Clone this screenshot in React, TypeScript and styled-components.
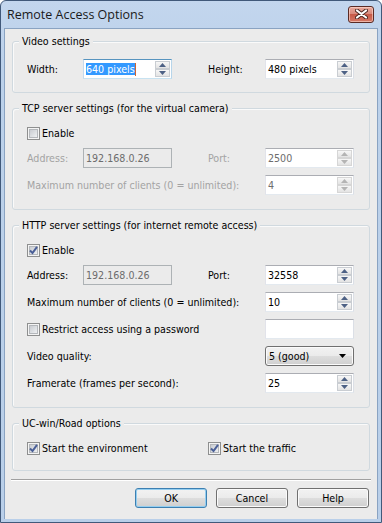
import React from 'react';
import styled, { createGlobalStyle } from 'styled-components';

const GlobalStyle = createGlobalStyle`
  html, body {
    margin: 0;
    padding: 0;
    background: #ffffff;
  }
  body {
    font-family: "DejaVu Sans Condensed", "DejaVu Sans", sans-serif;
    font-stretch: condensed;
    font-size: 10.6px;
    color: #000000;
  }
`;

const Window = styled.div`
  width: 382px;
  height: 523px;
  box-sizing: border-box;
  display: flex;
  flex-direction: column;
  border: 1px solid #41597a;
  border-radius: 6px 6px 0 0;
  background: linear-gradient(#c3d6ee, #bcd1ea 60px, #b9cfe9);
  padding: 0 3px 3px;
`;

const TitleBar = styled.div`
  height: 27px;
  flex: none;
  display: flex;
  align-items: center;
  justify-content: space-between;
  padding: 0 4px 0 3px;
`;

const Title = styled.span`
  font-family: "Open Sans", "DejaVu Sans", sans-serif;
  font-stretch: normal;
  font-weight: 400;
  font-size: 12.5px;
  color: #1a1a1a;
`;

const CloseButton = styled.div`
  width: 26px;
  height: 17px;
  box-sizing: border-box;
  margin-top: -1px;
  border: 1px solid #5a2b25;
  border-radius: 3px;
  background: linear-gradient(#e9a99c, #d98a7c 45%, #c75a48 50%, #d47866);
  box-shadow: inset 0 0 0 1px rgba(255, 220, 210, 0.6);
  display: flex;
  align-items: center;
  justify-content: center;
`;

const Client = styled.div`
  flex: 1;
  display: flex;
  flex-direction: column;
  gap: 8px;
  background: #ebebeb;
  border: 1px solid #8aa3c2;
  border-bottom: none;
  padding: 5px 7px 0;
`;

const Group = styled.fieldset<{ $top: number; $bottom: number }>`
  margin: 0;
  min-width: 0;
  border: 1px solid #d0d9df;
  border-radius: 3px;
  box-shadow: inset 1px 1px 0 #fafafa;
  padding: ${(p) => p.$top}px 15px ${(p) => p.$bottom}px 14px;
  display: flex;
  flex-direction: column;
  gap: 7px;
`;

const Legend = styled.legend`
  margin-left: -8px;
  padding: 0 3px;
  line-height: 14px;
  background: #ebebeb;
`;

const Row = styled.div`
  display: grid;
  grid-template-columns: 56px 89px 36px 57px 89px;
  align-items: center;
  height: 20px;
`;

const CheckRow = styled.div`
  display: grid;
  grid-template-columns: 181px 146px;
  align-items: center;
  height: 16px;
`;

const Label = styled.span<{ $span?: number; $disabled?: boolean }>`
  grid-column: span ${(p) => p.$span ?? 1};
  white-space: nowrap;
  color: ${(p) => (p.$disabled ? '#a3a3a3' : '#000000')};
`;

const Edit = styled.div<{ $disabled?: boolean; $focused?: boolean; $dim?: boolean }>`
  box-sizing: border-box;
  height: 20px;
  display: flex;
  align-items: center;
  padding: 0 1px 0 2px;
  background: ${(p) => (p.$disabled ? '#ebebeb' : '#ffffff')};
  border: 1px solid;
  border-color: ${(p) =>
    p.$focused
      ? '#5794bf #b7d5ea #c7e2f1 #c5daed'
      : p.$disabled
        ? '#adb2b5'
        : '#abadb3 #dbdfe6 #e3e9ef #e2e3ea'};
  color: ${(p) => (p.$disabled || p.$dim ? '#6d6d6d' : '#000000')};
  white-space: nowrap;
`;

const Selection = styled.span`
  background: #3399ff;
  color: #ffffff;
`;

const Caret = styled.span`
  width: 1px;
  height: 13px;
  background: #cc6633;
`;

const Spin = styled.div`
  margin-left: auto;
  width: 15px;
  height: 16px;
  display: flex;
  flex-direction: column;
`;

const SpinHalf = styled.div<{ $disabled?: boolean }>`
  flex: 1;
  display: flex;
  align-items: center;
  justify-content: center;
  box-sizing: border-box;
  border: 1px solid ${(p) => (p.$disabled ? '#d6d6d6' : '#c9cdd2')};
  background: linear-gradient(#f7f7f7, #e3e3e3);
  color: ${(p) => (p.$disabled ? '#b4b4b4' : '#4d6185')};
`;

const Combo = styled.div`
  box-sizing: border-box;
  height: 20px;
  display: flex;
  align-items: center;
  justify-content: space-between;
  padding: 0 7px 0 3px;
  border: 1px solid #707070;
  border-radius: 3px;
  background: linear-gradient(#f2f2f2, #ebebeb 48%, #dddddd 52%, #cfcfcf);
  box-shadow: inset 0 0 0 1px #fbfbfb;
`;

const CheckLabel = styled.label<{ $disabled?: boolean }>`
  display: flex;
  align-items: center;
  gap: 2px;
  white-space: nowrap;
  color: ${(p) => (p.$disabled ? '#a3a3a3' : '#000000')};
`;

const Box = styled.span`
  position: relative;
  width: 13px;
  height: 13px;
  box-sizing: border-box;
  border: 1px solid #8e8f8f;
  padding: 1px;
  background: #f4f4f4;
  flex: none;
`;

const BoxInner = styled.span`
  display: block;
  width: 9px;
  height: 9px;
  box-sizing: border-box;
  border: 1px solid #b4b7bb;
  background: linear-gradient(135deg, #c9ccd1, #eef0f2);
`;

const Tick = styled.svg`
  position: absolute;
  left: 0;
  top: 0;
`;

const Separator = styled.div`
  height: 1px;
  margin: 0 -1px;
  background: #a0a0a0;
  box-shadow: 0 1px 0 #ffffff;
`;

const ButtonBar = styled.div`
  display: flex;
  justify-content: flex-end;
  gap: 9px;
  padding-right: 1px;
`;

const Button = styled.button<{ $default?: boolean }>`
  width: 72px;
  height: 20px;
  padding: 0;
  font: inherit;
  color: #000000;
  border: 1px solid ${(p) => (p.$default ? '#3c7fb1' : '#707070')};
  border-radius: 3px;
  background: linear-gradient(#f2f2f2, #ebebeb 48%, #dddddd 52%, #cfcfcf);
  box-shadow: inset 0 0 0 1px ${(p) => (p.$default ? '#94cef0' : '#fbfbfb')};
`;

function Arrow({ up }: { up?: boolean }) {
  return (
    <svg width="7" height="4" viewBox="0 0 7 4">
      <path d={up ? 'M0 4 L3.5 0 L7 4 Z' : 'M0 0 L7 0 L3.5 4 Z'} fill="currentColor" />
    </svg>
  );
}

function Spinner({ disabled }: { disabled?: boolean }) {
  return (
    <Spin>
      <SpinHalf $disabled={disabled}>
        <Arrow up />
      </SpinHalf>
      <SpinHalf $disabled={disabled}>
        <Arrow />
      </SpinHalf>
    </Spin>
  );
}

function CheckBox({ label, checked, disabled }: { label: string; checked?: boolean; disabled?: boolean }) {
  return (
    <CheckLabel $disabled={disabled}>
      <Box>
        <BoxInner />
        {checked && (
          <Tick width="11" height="11" viewBox="0 0 11 11">
            <path d="M2 5.5 L4.5 8 L9 1.8" fill="none" stroke="#4a5f97" strokeWidth="2" />
          </Tick>
        )}
      </Box>
      {label}
    </CheckLabel>
  );
}

export default function App() {
  return (
    <Window>
      <GlobalStyle />
      <TitleBar>
        <Title>Remote Access Options</Title>
        <CloseButton>
          <svg width="13" height="10" viewBox="0 0 13 10">
            <path d="M2 1.5 L11 8.5 M11 1.5 L2 8.5" stroke="#4a2620" strokeWidth="4" strokeLinecap="round" />
            <path d="M2 1.5 L11 8.5 M11 1.5 L2 8.5" stroke="#ffffff" strokeWidth="2.2" strokeLinecap="round" />
          </svg>
        </CloseButton>
      </TitleBar>
      <Client>
        <Group $top={11} $bottom={13}>
          <Legend>Video settings</Legend>
          <Row>
            <Label>Width:</Label>
            <Edit $focused>
              <Selection>640 pixels</Selection>
              <Caret />
              <Spinner />
            </Edit>
            <span />
            <Label>Height:</Label>
            <Edit>
              480 pixels
              <Spinner />
            </Edit>
          </Row>
        </Group>

        <Group $top={10} $bottom={14}>
          <Legend>TCP server settings (for the virtual camera)</Legend>
          <CheckRow>
            <CheckBox label="Enable" />
          </CheckRow>
          <Row>
            <Label $disabled>Address:</Label>
            <Edit $disabled>192.168.0.26</Edit>
            <span />
            <Label $disabled>Port:</Label>
            <Edit $dim>
              2500
              <Spinner disabled />
            </Edit>
          </Row>
          <Row>
            <Label $span={4} $disabled>
              Maximum number of clients (0 = unlimited):
            </Label>
            <Edit $dim>
              4
              <Spinner disabled />
            </Edit>
          </Row>
        </Group>

        <Group $top={10} $bottom={14}>
          <Legend>HTTP server settings (for internet remote access)</Legend>
          <CheckRow>
            <CheckBox label="Enable" checked />
          </CheckRow>
          <Row>
            <Label>Address:</Label>
            <Edit $disabled>192.168.0.26</Edit>
            <span />
            <Label>Port:</Label>
            <Edit>
              32558
              <Spinner />
            </Edit>
          </Row>
          <Row>
            <Label $span={4}>Maximum number of clients (0 = unlimited):</Label>
            <Edit>
              10
              <Spinner />
            </Edit>
          </Row>
          <Row>
            <Label $span={4}>
              <CheckBox label="Restrict access using a password" />
            </Label>
            <Edit />
          </Row>
          <Row>
            <Label $span={4}>Video quality:</Label>
            <Combo>
              5 (good)
              <svg width="7" height="4" viewBox="0 0 7 4">
                <path d="M0 0 L7 0 L3.5 4 Z" fill="#000000" />
              </svg>
            </Combo>
          </Row>
          <Row>
            <Label $span={4}>Framerate (frames per second):</Label>
            <Edit>
              25
              <Spinner />
            </Edit>
          </Row>
        </Group>

        <Group $top={10} $bottom={14}>
          <Legend>UC-win/Road options</Legend>
          <CheckRow>
            <CheckBox label="Start the environment" checked />
            <CheckBox label="Start the traffic" checked />
          </CheckRow>
        </Group>

        <Separator />
        <ButtonBar>
          <Button $default>OK</Button>
          <Button>Cancel</Button>
          <Button>Help</Button>
        </ButtonBar>
      </Client>
    </Window>
  );
}
